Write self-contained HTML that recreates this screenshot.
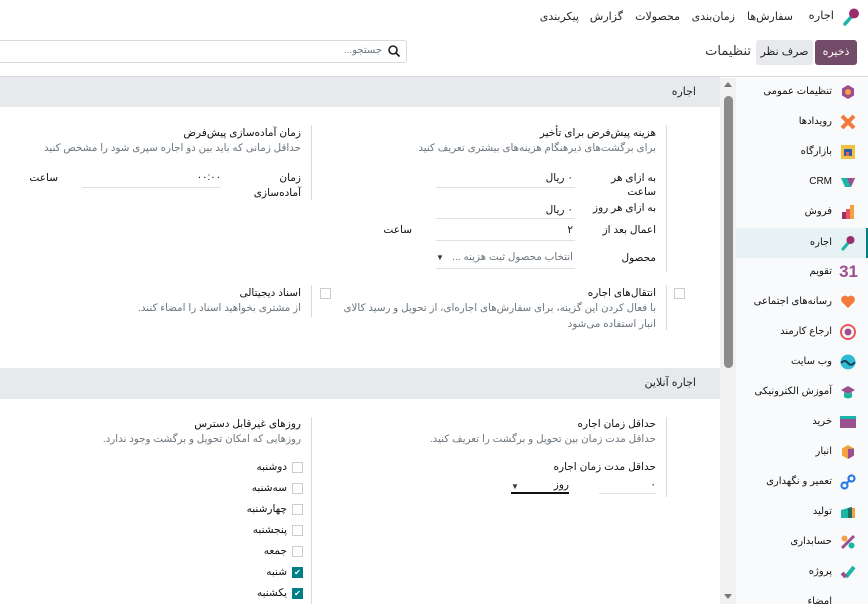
<!DOCTYPE html>
<html lang="fa" dir="rtl"><head><meta charset="utf-8">
<style>
*{box-sizing:border-box;margin:0;padding:0}
body{width:868px;height:604px;overflow:hidden;background:#fff;font-family:"Liberation Sans","Noto Sans CJK SC","DejaVu Sans",sans-serif;color:#212529;font-size:10.5px;position:relative}
.a{position:absolute;white-space:nowrap;line-height:16px}
.t{font-size:10.5px;color:#111}
.g{color:#6c757d;font-size:10.3px}
.vl{position:absolute;width:1px;background:#d8dadd}
.ul{position:absolute;height:1px;background:#dee2e6}
.cb{position:absolute;width:11px;height:11px;border:1px solid #c9ccd0;background:#fff}
.cbc{position:absolute;width:11px;height:11px;background:#017e84;color:#fff;font-size:8px;line-height:11px;text-align:center}
.side{position:absolute;left:736px;top:78px;width:132px;height:526px;background:#f9fafb}
.si{position:absolute;right:36px;font-size:10px;color:#111;white-space:nowrap;line-height:16px}
.ic{position:absolute;right:12px;width:16px;height:16px}
.n{font-size:11px;top:9px}
</style></head><body>
<svg class="a" style="left:841px;top:7px" width="20" height="20" viewBox="0 0 20 20"><line x1="4" y1="17" x2="11" y2="9" stroke="#1ab5a4" stroke-width="3.5" stroke-linecap="round"/><circle cx="13" cy="6.5" r="5" fill="#9b2f6e"/></svg>
<div class="a" style="right:34px;top:8px;font-size:11.5px">اجاره</div>
<div class="a n" style="right:75px">سفارش‌ها</div>
<div class="a n" style="right:133px">زمان‌بندی</div>
<div class="a n" style="right:188px">محصولات</div>
<div class="a n" style="right:245px">گزارش</div>
<div class="a n" style="right:289px">پیکربندی</div>
<div class="a" style="left:815px;top:40px;width:42px;height:25px;background:#714b67;color:#fff;border-radius:3px;text-align:center;line-height:25px;font-size:11px">ذخیره</div>
<div class="a" style="left:756px;top:40px;width:57px;height:25px;background:#e7e9ed;color:#222;border-radius:3px;text-align:center;line-height:25px;font-size:11px">صرف نظر</div>
<div class="a" style="right:117px;top:43px;font-size:13px;color:#333">تنظیمات</div>
<div class="a" style="left:-4px;top:40px;width:411px;height:23px;border:1px solid #d8dadd;border-radius:3px"></div>
<svg class="a" style="left:387px;top:44px" width="14" height="14" viewBox="0 0 14 14"><circle cx="6" cy="6" r="4" fill="none" stroke="#222" stroke-width="1.6"/><line x1="9" y1="9" x2="12.5" y2="12.5" stroke="#222" stroke-width="1.8"/></svg>
<div class="a g" style="right:486px;top:43px;font-size:10px">جستجو...</div>
<div class="a" style="left:0;top:76px;width:868px;height:1px;background:#d8dadd"></div>

<div class="a" style="left:0;top:77px;width:720px;height:30px;background:#e7e9ed"></div>
<div class="a" style="right:172px;top:84px;font-size:11px">اجاره</div>
<div class="a" style="left:0;top:368px;width:720px;height:31px;background:#e7e9ed"></div>
<div class="a" style="right:172px;top:375px;font-size:11px">اجاره آنلاین</div>

<div class="vl" style="left:666px;top:125px;height:147px"></div>
<div class="a t" style="right:212px;top:125px">هزینه پیش‌فرض برای تأخیر</div>
<div class="a g" style="right:212px;top:141px">برای برگشت‌های دیرهنگام هزینه‌های بیشتری تعریف کنید</div>
<div class="a t" style="right:212px;top:170px">به ازای هر</div>
<div class="a t" style="right:212px;top:184px">ساعت</div>
<div class="a t" style="right:212px;top:200px">به ازای هر روز</div>
<div class="a t" style="right:212px;top:222px">اعمال بعد از</div>
<div class="a t" style="right:212px;top:250px">محصول</div>
<div class="a t" style="right:295px;top:170px">۰ ریال</div><div class="ul" style="left:436px;top:187px;width:139px"></div>
<div class="a t" style="right:295px;top:202px">۰ ریال</div><div class="ul" style="left:436px;top:218px;width:139px"></div>
<div class="a t" style="right:295px;top:222px">۲</div><div class="ul" style="left:436px;top:240px;width:139px"></div>
<div class="a t" style="right:456px;top:222px">ساعت</div>
<div class="a g" style="right:295px;top:250px">انتخاب محصول ثبت هزینه ...</div>
<div class="a" style="left:436px;top:250px;font-size:8px;color:#333">▼</div>
<div class="ul" style="left:436px;top:268px;width:139px"></div>

<div class="vl" style="left:311px;top:125px;height:75px"></div>
<div class="a t" style="right:567px;top:125px">زمان آماده‌سازی پیش‌فرض</div>
<div class="a g" style="right:567px;top:141px">حداقل زمانی که باید بین دو اجاره سپری شود را مشخص کنید</div>
<div class="a t" style="right:567px;top:170px">زمان</div>
<div class="a t" style="right:567px;top:185px">آماده‌سازی</div>
<div class="a t" style="right:647px;top:170px;font-size:10px">۰۰:۰۰</div>
<div class="ul" style="left:82px;top:187px;width:139px"></div>
<div class="a t" style="right:810px;top:170px">ساعت</div>

<div class="cb" style="left:674px;top:288px"></div>
<div class="vl" style="left:666px;top:285px;height:45px"></div>
<div class="a t" style="right:212px;top:285px">انتقال‌های اجاره</div>
<div class="a g" style="right:212px;top:301px">با فعال کردن این گزینه، برای سفارش‌های اجاره‌ای، از تحویل و رسید کالای</div>
<div class="a g" style="right:212px;top:317px">انبار استفاده می‌شود</div>
<div class="cb" style="left:320px;top:288px"></div>
<div class="vl" style="left:311px;top:285px;height:32px"></div>
<div class="a t" style="right:567px;top:285px">اسناد دیجیتالی</div>
<div class="a g" style="right:567px;top:301px">از مشتری بخواهید اسناد را امضاء کنند.</div>

<div class="vl" style="left:666px;top:417px;height:80px"></div>
<div class="a t" style="right:212px;top:416px">حداقل زمان اجاره</div>
<div class="a g" style="right:212px;top:432px">حداقل مدت زمان بین تحویل و برگشت را تعریف کنید.</div>
<div class="a t" style="right:212px;top:459px">حداقل مدت زمان اجاره</div>
<div class="a t" style="right:212px;top:477px">۰</div>
<div class="ul" style="left:599px;top:493px;width:57px"></div>
<div class="a t" style="right:299px;top:477px">روز</div>
<div class="a" style="left:511px;top:479px;font-size:8px;color:#333">▼</div>
<div class="ul" style="left:511px;top:492px;width:58px;height:1.5px;background:#111"></div>

<div class="vl" style="left:311px;top:417px;height:187px"></div>
<div class="a t" style="right:567px;top:416px">روزهای غیرقابل دسترس</div>
<div class="a g" style="right:567px;top:432px">روزهایی که امکان تحویل و برگشت وجود ندارد.</div>
<div class="cb" style="left:292px;top:462px"></div><div class="a t" style="right:581px;top:459px">دوشنبه</div>
<div class="cb" style="left:292px;top:483px"></div><div class="a t" style="right:581px;top:480px">سه‌شنبه</div>
<div class="cb" style="left:292px;top:504px"></div><div class="a t" style="right:581px;top:501px">چهارشنبه</div>
<div class="cb" style="left:292px;top:525px"></div><div class="a t" style="right:581px;top:522px">پنجشنبه</div>
<div class="cb" style="left:292px;top:546px"></div><div class="a t" style="right:581px;top:543px">جمعه</div>
<div class="cbc" style="left:292px;top:567px">✔</div><div class="a t" style="right:581px;top:564px">شنبه</div>
<div class="cbc" style="left:292px;top:588px">✔</div><div class="a t" style="right:581px;top:585px">یکشنبه</div>

<div class="a" style="left:720px;top:78px;width:16px;height:526px;background:#f1f1f1"></div>
<div class="a" style="left:724px;top:96px;width:9px;height:272px;background:#8c8c8c;border-radius:5px"></div>
<div class="a" style="left:724px;top:82px;width:0;height:0;border-left:4.5px solid transparent;border-right:4.5px solid transparent;border-bottom:5px solid #777"></div>
<div class="a" style="left:724px;top:594px;width:0;height:0;border-left:4.5px solid transparent;border-right:4.5px solid transparent;border-top:5px solid #777"></div>

<div class="side">
<div style="position:absolute;left:0;top:150px;width:132px;height:30px;background:#e6f2f3;border-right:2px solid #017e84"></div>
<svg class="ic" style="top:6px" viewBox="0 0 16 16"><polygon points="8,1 14,4.5 14,11.5 8,15 2,11.5 2,4.5" fill="#9b4f8e"/><circle cx="8" cy="8" r="3" fill="#f6a04d"/></svg><div class="si" style="top:6px">تنظیمات عمومی</div>
<svg class="ic" style="top:36px" viewBox="0 0 16 16"><path d="M2 2 L14 14 M14 2 L2 14" stroke="#f47a3a" stroke-width="4"/></svg><div class="si" style="top:36px">رویدادها</div>
<svg class="ic" style="top:66px" viewBox="0 0 16 16"><rect x="1" y="1" width="14" height="14" fill="#f4c242"/><rect x="4" y="5" width="8" height="7" fill="#2c5ea8"/><rect x="6" y="8" width="3" height="4" fill="#e85c5c"/></svg><div class="si" style="top:66px">بازارگاه</div>
<svg class="ic" style="top:96px" viewBox="0 0 16 16"><polygon points="1,4 15,4 11,13 5,13" fill="#1ab5a4"/><polygon points="7,4 15,4 11,13" fill="#9b4f8e"/></svg><div class="si" style="top:96px">CRM</div>
<svg class="ic" style="top:126px" viewBox="0 0 16 16"><rect x="2" y="8" width="4" height="7" fill="#9b2f6e"/><rect x="6" y="5" width="4" height="10" fill="#e8555a"/><rect x="10" y="1" width="4" height="14" fill="#f5a142"/></svg><div class="si" style="top:126px">فروش</div>
<svg class="ic" style="top:157px" viewBox="0 0 16 16"><line x1="3" y1="14" x2="9" y2="7" stroke="#1ab5a4" stroke-width="3" stroke-linecap="round"/><circle cx="10.5" cy="5" r="4" fill="#9b2f6e"/></svg><div class="si" style="top:157px">اجاره</div>
<div class="ic" style="top:185px;font-size:17px;font-weight:bold;color:#9b4f8e;line-height:17px;width:20px;right:10px">31</div><div class="si" style="top:186px">تقویم</div>
<svg class="ic" style="top:216px" viewBox="0 0 16 16"><path d="M8 14 L2 8 A3.5 3.5 0 0 1 8 3 A3.5 3.5 0 0 1 14 8 Z" fill="#f47a3a"/></svg><div class="si" style="top:216px">رسانه‌های اجتماعی</div>
<svg class="ic" style="top:246px" viewBox="0 0 16 16"><circle cx="8" cy="8" r="7" fill="none" stroke="#e8555a" stroke-width="2"/><circle cx="8" cy="8" r="3.5" fill="#9b4f8e"/></svg><div class="si" style="top:246px">ارجاع کارمند</div>
<svg class="ic" style="top:276px" viewBox="0 0 16 16"><circle cx="8" cy="8" r="7.5" fill="#2ebcd2"/><path d="M1 9 Q5 5 8 9 T15 8" stroke="#1d3e5e" stroke-width="2" fill="none"/></svg><div class="si" style="top:276px">وب سایت</div>
<svg class="ic" style="top:306px" viewBox="0 0 16 16"><path d="M1 6 L8 2 L15 6 L8 10 Z" fill="#9b4f8e"/><path d="M4 8 V13 Q8 16 12 13 V8 L8 10 Z" fill="#1ab5a4"/></svg><div class="si" style="top:306px">آموزش الکترونیکی</div>
<svg class="ic" style="top:336px" viewBox="0 0 16 16"><rect x="0" y="2" width="16" height="3" fill="#1ab5a4"/><rect x="0" y="5" width="16" height="9" fill="#9b4f8e"/></svg><div class="si" style="top:336px">خرید</div>
<svg class="ic" style="top:366px" viewBox="0 0 16 16"><polygon points="8,1 14,4.5 14,11.5 8,15 2,11.5 2,4.5" fill="#f5a142"/><polygon points="8,5 14,4.5 14,11.5 8,15" fill="#9b4f8e"/></svg><div class="si" style="top:366px">انبار</div>
<svg class="ic" style="top:396px" viewBox="0 0 16 16"><circle cx="4.5" cy="11.5" r="3" fill="none" stroke="#2c7be5" stroke-width="2.2"/><circle cx="11.5" cy="4.5" r="3" fill="none" stroke="#2c7be5" stroke-width="2.2"/><line x1="6.5" y1="9.5" x2="9.5" y2="6.5" stroke="#2c7be5" stroke-width="2.2"/></svg><div class="si" style="top:396px">تعمیر و نگهداری</div>
<svg class="ic" style="top:426px" viewBox="0 0 16 16"><path d="M1 6 L8 4 V14 H1 Z" fill="#1ab5a4"/><path d="M8 4 L12 3 V14 H8 Z" fill="#1d6e63"/><rect x="12" y="4" width="3" height="10" fill="#f5a142"/></svg><div class="si" style="top:426px">تولید</div>
<svg class="ic" style="top:456px" viewBox="0 0 16 16"><line x1="2" y1="14" x2="14" y2="2" stroke="#9b4f8e" stroke-width="3"/><circle cx="4.5" cy="4.5" r="3" fill="#f5a142"/><circle cx="11.5" cy="11.5" r="3" fill="#1ab5a4"/></svg><div class="si" style="top:456px">حسابداری</div>
<svg class="ic" style="top:486px" viewBox="0 0 16 16"><line x1="6" y1="13" x2="14" y2="3" stroke="#1ab5a4" stroke-width="4"/><line x1="2" y1="9" x2="6" y2="13" stroke="#9b4f8e" stroke-width="4"/></svg><div class="si" style="top:486px">پروژه</div>
<div class="si" style="top:516px">امضاء</div>
</div>
</body></html>
